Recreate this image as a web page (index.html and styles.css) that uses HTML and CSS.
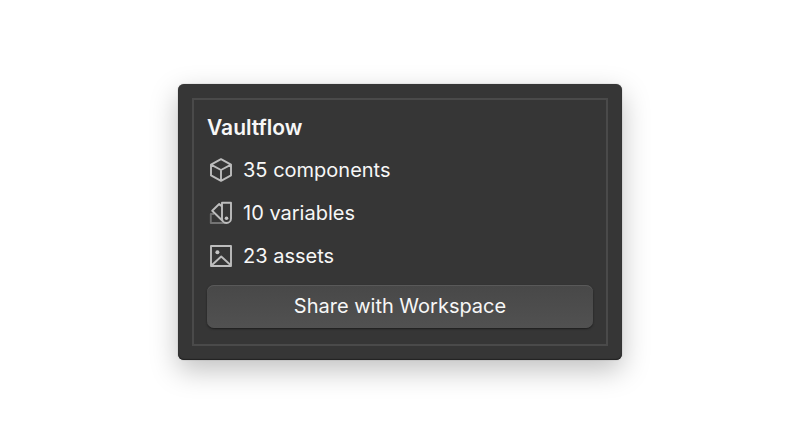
FILE: index.html
```html
<!DOCTYPE html>
<html lang="en">
<head>
<meta charset="utf-8">
<meta name="viewport" content="width=device-width, initial-scale=1">
<title>Vaultflow</title>
<link rel="stylesheet" href="styles.css">
</head>
<body>
<main class="card">
  <section class="panel" aria-labelledby="library-name">
    <h1 class="row title" id="library-name">Vaultflow</h1>
    <ul class="stats">
      <li class="row">
        <svg class="icon" viewBox="0 0 24 24" aria-hidden="true"><path d="M12 1.2 22 6.6V17.4L12 22.8 2 17.4V6.6ZM2 6.6 12 12 22 6.6M12 12V22.8"/></svg>
        <span>35 components</span>
      </li>
      <li class="row">
        <svg class="icon" viewBox="0 0 24 24" aria-hidden="true"><path class="dim" d="M5 13H1.8V22H17"/><path d="M13 1.8H22V17.5A4.5 4.5 0 0 1 13 17.5ZM13 5.5 10.2 3 3.2 9.8 14.2 20.5"/><circle class="dot" cx="17.5" cy="17.2" r="1.8"/></svg>
        <span>10 variables</span>
      </li>
      <li class="row">
        <svg class="icon" viewBox="0 0 24 24" aria-hidden="true"><path d="M2 2H22V22H2ZM3 21 12.2 12.5 21.5 21"/><circle class="dot" cx="8.4" cy="8.3" r="2"/></svg>
        <span>23 assets</span>
      </li>
    </ul>
    <button class="share" type="button">Share with Workspace</button>
  </section>
</main>
</body>
</html>
```
FILE: styles.css
```css
* {
  box-sizing: border-box;
}

body {
  margin: 0;
  min-height: 100vh;
  display: flex;
  align-items: center;
  justify-content: center;
  background: #fff;
  color: #f7f7f7;
  font: 400 20px/43px Inter, "Liberation Sans", sans-serif;
}

.card {
  width: 100%;
  max-width: 444px;
  padding: 14px;
  border-radius: 6px;
  background: #363636;
  box-shadow: 0 0 1px rgba(0, 0, 0, 0.5), 0 10px 28px rgba(0, 0, 0, 0.25), inset 0 -1px 1px #222;
}

.panel {
  padding: 6px 13px 16px;
  border: 2px solid #4a4a4a;
}

.row {
  display: flex;
  align-items: center;
  gap: 10px;
}

.title {
  margin: 0;
  font-size: 21px;
  font-weight: 600;
}

.stats {
  margin: 0 0 7px;
  padding: 0 0 0 2px;
  list-style: none;
}

.icon {
  width: 24px;
  height: 24px;
  flex: none;
  fill: none;
  stroke: #bdbdbd;
  stroke-width: 1.9;
  stroke-linejoin: round;
}

.icon .dim {
  stroke: #737373;
}

.icon .dot {
  fill: #c4c4c4;
  stroke: none;
}

.share {
  display: block;
  width: 100%;
  padding: 0;
  border: 0;
  border-radius: 7px;
  background: linear-gradient(#484848, #515151);
  box-shadow: inset 0 1px 0 #595959, 0 1px 2px #1c1c1c;
  color: inherit;
  font: inherit;
}
```
